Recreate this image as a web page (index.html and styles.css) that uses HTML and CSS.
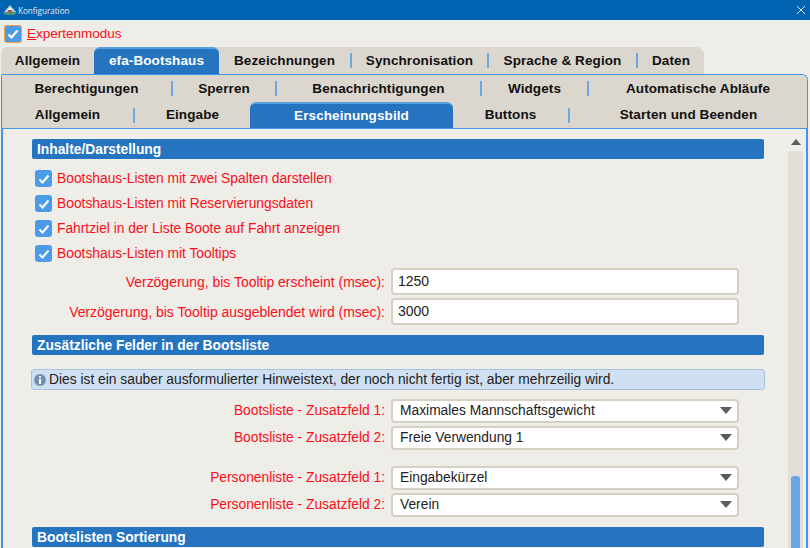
FILE: index.html
```html
<!DOCTYPE html>
<html lang="de">
  <head>
    <meta charset="UTF-8" />
    <meta name="viewport" content="width=device-width, initial-scale=1.0" />
    <title>Konfiguration</title>
    <link rel="stylesheet" href="styles.css">
  </head>
  <body>
    <div class="titlebar">
      <svg class="app-icon" width="14" height="12" viewBox="0 0 14 12">
        <path d="M1 8 L7 1 L13 8 Z" fill="#a9cbd6" />
        <path d="M4 6 L7 3 L10 6 Z" fill="#e8f0e8" />
        <path d="M5 6 H9 V8 H5 Z" fill="#b5524d" />
        <path d="M0 8 H14 L12 11 H2 Z" fill="#4f8f72" />
      </svg>
      <span class="titlebar-text">Konfiguration</span>
      <svg class="close-icon" width="10" height="10" viewBox="0 0 10 10">
        <path d="M1 1 L9 9 M9 1 L1 9" stroke="#dbe9f5" stroke-width="1" fill="none" />
      </svg>
    </div>

    <div class="expert-row">
      <span class="check check-focus">
        <svg width="14" height="12" viewBox="0 0 14 12"><path d="M2.5 6.5 L5.5 9.5 L11.5 2.5" stroke="#fff" stroke-width="2.2" fill="none" /></svg>
      </span>
      <span class="expert-label"><u>E</u>xpertenmodus</span>
    </div>

    <div class="tabs main-tabs">
      <div class="tab">Allgemein</div>
      <div class="tab tab-active">efa-Bootshaus</div>
      <div class="tab">Bezeichnungen</div>
      <i class="tab-sep"></i>
      <div class="tab">Synchronisation</div>
      <i class="tab-sep"></i>
      <div class="tab">Sprache &amp; Region</div>
      <i class="tab-sep"></i>
      <div class="tab">Daten</div>
    </div>

    <div class="outer-panel">
      <div class="subtabs">
        <div class="tabs sub-row-1">
          <div class="tab">Berechtigungen</div>
          <i class="tab-sep"></i>
          <div class="tab">Sperren</div>
          <i class="tab-sep"></i>
          <div class="tab">Benachrichtigungen</div>
          <i class="tab-sep"></i>
          <div class="tab">Widgets</div>
          <i class="tab-sep"></i>
          <div class="tab">Automatische Abläufe</div>
        </div>
        <div class="tabs sub-row-2">
          <div class="tab">Allgemein</div>
          <i class="tab-sep"></i>
          <div class="tab">Eingabe</div>
          <div class="tab tab-active">Erscheinungsbild</div>
          <div class="tab">Buttons</div>
          <i class="tab-sep"></i>
          <div class="tab">Starten und Beenden</div>
        </div>
      </div>

      <div class="content">
        <div class="form">
          <h3 class="section">Inhalte/Darstellung</h3>
          <div class="check-list">
            <label class="check-row">
              <span class="check"><svg width="12" height="10" viewBox="0 0 12 10"><path d="M1.5 5.5 L4.5 8.5 L10.5 1.5" stroke="#fff" stroke-width="2" fill="none" /></svg></span>
              Bootshaus-Listen mit zwei Spalten darstellen
            </label>
            <label class="check-row">
              <span class="check"><svg width="12" height="10" viewBox="0 0 12 10"><path d="M1.5 5.5 L4.5 8.5 L10.5 1.5" stroke="#fff" stroke-width="2" fill="none" /></svg></span>
              Bootshaus-Listen mit Reservierungsdaten
            </label>
            <label class="check-row">
              <span class="check"><svg width="12" height="10" viewBox="0 0 12 10"><path d="M1.5 5.5 L4.5 8.5 L10.5 1.5" stroke="#fff" stroke-width="2" fill="none" /></svg></span>
              Fahrtziel in der Liste Boote auf Fahrt anzeigen
            </label>
            <label class="check-row">
              <span class="check"><svg width="12" height="10" viewBox="0 0 12 10"><path d="M1.5 5.5 L4.5 8.5 L10.5 1.5" stroke="#fff" stroke-width="2" fill="none" /></svg></span>
              Bootshaus-Listen mit Tooltips
            </label>
          </div>

          <div class="field-row field-text">
            <span class="field-label label-long">Verzögerung, bis Tooltip erscheint (msec):</span>
            <div class="field-box">1250</div>
          </div>
          <div class="field-row field-text">
            <span class="field-label label-long">Verzögerung, bis Tooltip ausgeblendet wird (msec):</span>
            <div class="field-box">3000</div>
          </div>

          <h3 class="section section-2">Zusätzliche Felder in der Bootsliste</h3>

          <div class="hint">
            <svg width="14" height="14" viewBox="0 0 14 14">
              <circle cx="7" cy="7" r="6" fill="#6f8fb5" />
              <circle cx="7" cy="4" r="1.1" fill="#fff" />
              <path d="M6 6 H8 V11 H6 Z" fill="#fff" />
            </svg>
            Dies ist ein sauber ausformulierter Hinweistext, der noch nicht fertig ist, aber mehrzeilig wird.
          </div>

          <div class="field-row field-select">
            <span class="field-label">Bootsliste - Zusatzfeld 1:</span>
            <div class="field-box">Maximales Mannschaftsgewicht<i class="arrow"></i></div>
          </div>
          <div class="field-row field-select">
            <span class="field-label">Bootsliste - Zusatzfeld 2:</span>
            <div class="field-box">Freie Verwendung 1<i class="arrow"></i></div>
          </div>
          <div class="field-row field-select group-start">
            <span class="field-label">Personenliste - Zusatzfeld 1:</span>
            <div class="field-box">Eingabekürzel<i class="arrow"></i></div>
          </div>
          <div class="field-row field-select">
            <span class="field-label">Personenliste - Zusatzfeld 2:</span>
            <div class="field-box">Verein<i class="arrow"></i></div>
          </div>

          <h3 class="section section-3">Bootslisten Sortierung</h3>
        </div>

        <div class="scrollbar">
          <i class="scroll-up"></i>
          <div class="scroll-track">
            <div class="scroll-thumb"></div>
          </div>
        </div>
      </div>
    </div>
  </body>
</html>
```

FILE: styles.css
```css
html, body {
  height: 100%;
}
body {
  font-family: "Liberation Sans", Arial, sans-serif;
  background-color: #eeede8;
  margin: 0;
  padding: 0;
  overflow: hidden;
  color: #111;
}

/* window title */
.titlebar {
  height: 20px;
  background-color: #0063b1;
  display: flex;
  align-items: center;
  padding: 0 4px 0 3px;
  color: #e6eef6;
  font-family: "Open Sans", sans-serif;
  font-size: 8.1px;
}
.titlebar-text {
  margin-left: 1px;
  flex: 1;
}

/* top checkbox */
.expert-row {
  height: 27px;
  display: flex;
  align-items: center;
  padding-left: 4px;
  gap: 5px;
}
.expert-label {
  color: #fb0f1a;
  font-size: 13.5px;
}
.check {
  width: 17px;
  height: 17px;
  border-radius: 3px;
  background-color: #4c9be8;
  display: flex;
  align-items: center;
  justify-content: center;
  flex: none;
}
.check-focus {
  width: 16px;
  height: 16px;
  border: 1.5px solid #f0a040;
}

/* tabs */
.tabs {
  display: grid;
  align-items: center;
  font-size: 13.5px;
  font-weight: bold;
  letter-spacing: 0.1px;
}
.tab {
  height: 100%;
  display: flex;
  align-items: center;
  justify-content: center;
  box-sizing: border-box;
}
.tab-active {
  background-color: #2574bf;
  color: #fff;
  border-top: 2px solid #5b9fe3;
  border-radius: 6px 6px 0 0;
  padding-bottom: 2px;
}
.tab-sep {
  display: block;
  width: 2px;
  height: 15px;
  justify-self: center;
  background-color: #6fa8e0;
}
.main-tabs {
  margin-left: 1px;
  width: 703px;
  height: 27px;
  background-color: #dbd7ce;
  border-radius: 6px 8px 0 0;
  grid-template-columns: 93px 125px 131px 2px 135px 2px 147px 2px 66px;
}
.outer-panel {
  margin-left: 1px;
  width: 807px;
  height: 474px;
  box-sizing: border-box;
  border: 1px solid #3f96e8;
  border-bottom: none;
  border-radius: 2px 6px 0 0;
  display: flex;
  flex-direction: column;
}
.subtabs {
  background-color: #dbd7ce;
  border-bottom: 1px solid #3f96e8;
  border-radius: 0 6px 0 0;
}
.sub-row-1 {
  height: 27px;
  grid-template-columns: 169px 2px 102px 2px 203px 2px 105px 2px 218px;
}
.sub-row-2 {
  height: 26px;
  grid-template-columns: 131px 2px 115px 203px 115px 2px 237px;
}
.sub-row-2 .tab:not(.tab-active) {
  padding-bottom: 2px;
}

/* content area */
.content {
  flex: 1;
  display: flex;
  border-left: 1px solid #3f96e8;
  border-right: 1px solid #3f96e8;
  min-height: 0;
}
.form {
  width: 785px;
  padding: 10px 0 0 29px;
  box-sizing: border-box;
}
.section {
  margin: 0;
  width: 732px;
  height: 20px;
  line-height: 21px;
  box-sizing: border-box;
  padding-left: 5px;
  background-color: #2574bf;
  border-radius: 2px;
  color: #fff;
  font-size: 13.8px;
  font-weight: bold;
}
.section-2 {
  margin-top: 10px;
}
.section-3 {
  margin-top: 10px;
}
.check-list {
  margin-top: 7px;
  padding-left: 3px;
}
.check-row {
  height: 25px;
  display: flex;
  align-items: center;
  gap: 5px;
  color: #fb0f1a;
  font-size: 13.8px;
}
.field-row {
  display: flex;
  align-items: center;
  gap: 6px;
  font-size: 13.8px;
}
.field-label {
  width: 353px;
  text-align: right;
  color: #fb0f1a;
  white-space: nowrap;
}
.label-long {
  font-size: 13.95px;
}
.field-box {
  width: 348px;
  box-sizing: border-box;
  background-color: #fff;
  border: 2px solid #d6d0c3;
  border-radius: 4px;
  padding-left: 7px;
  display: flex;
  align-items: center;
  justify-content: space-between;
  color: #222;
}
.field-text {
  height: 27px;
  margin-bottom: 3px;
}
.field-text .field-box {
  height: 27px;
  padding-left: 5px;
  padding-bottom: 2px;
  font-size: 14px;
}
.check-list + .field-row {
  margin-top: 2px;
}
.field-select {
  height: 24px;
  margin-bottom: 3px;
}
.field-select .field-box {
  height: 24px;
  padding-right: 5px;
  padding-bottom: 2px;
}
.field-select .field-label {
  padding-bottom: 2px;
}
.group-start {
  margin-top: 16px;
}
.arrow {
  width: 0;
  height: 0;
  border-left: 6px solid transparent;
  border-right: 6px solid transparent;
  border-top: 7px solid #5c5c5c;
}
.hint {
  margin: 14px 0 9px -1px;
  width: 734px;
  height: 21px;
  box-sizing: border-box;
  border: 1px solid #a9c3df;
  border-radius: 3px;
  background-color: #cfe0f0;
  display: flex;
  align-items: center;
  gap: 2px;
  padding-left: 1px;
  font-size: 13.8px;
  color: #222;
}

/* scrollbar */
.scrollbar {
  width: 15px;
  display: flex;
  flex-direction: column;
  align-items: center;
}
.scroll-up {
  margin-top: 10px;
  width: 0;
  height: 0;
  border-left: 5px solid transparent;
  border-right: 5px solid transparent;
  border-bottom: 6px solid #5c5c5c;
}
.scroll-track {
  margin-top: 6px;
  flex: 1;
  width: 15px;
  background-color: #e2dfd7;
  border-radius: 3px 3px 0 0;
  display: flex;
  flex-direction: column;
  justify-content: flex-end;
  align-items: center;
}
.scroll-thumb {
  width: 9px;
  height: 72px;
  background-color: #6aa6e2;
  border-radius: 3px 3px 0 0;
}
```
